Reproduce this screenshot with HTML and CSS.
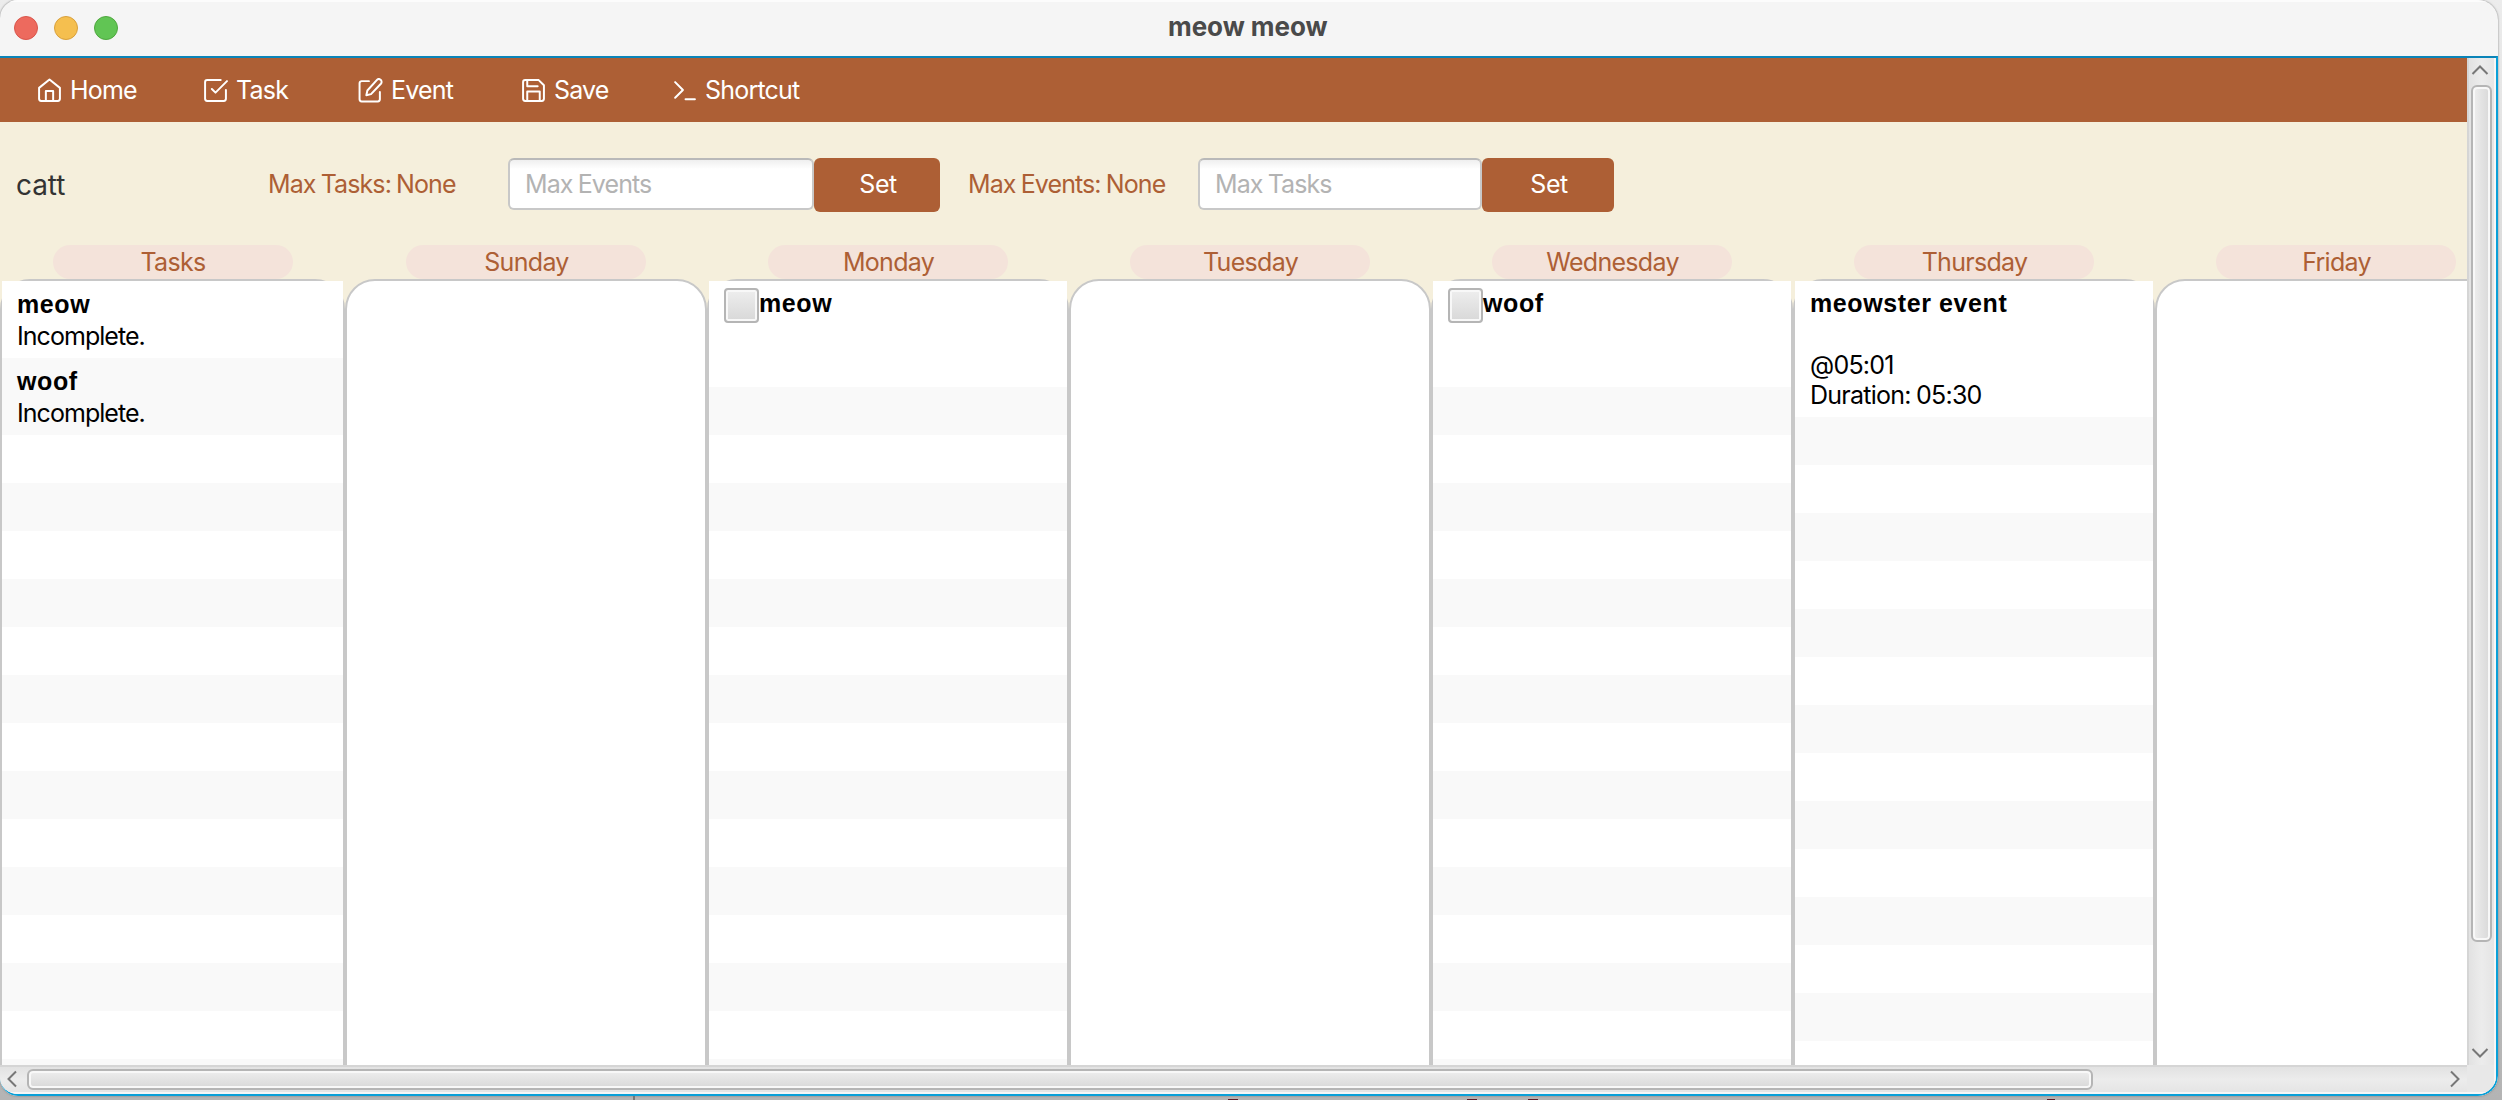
FILE: index.html
```
<!DOCTYPE html>
<html lang="en"><head><meta charset="utf-8"><title>meow meow</title><link rel="stylesheet" href="styles.css"></head>
<body>
<div class="window">
  <header class="titlebar"><div class="lights"><i class="light red"></i><i class="light yellow"></i><i class="light green"></i></div><span class="title">meow meow</span></header>
  <div class="frame">
    <div class="viewport">
      <nav class="nav">
        <a class="item home"><svg class="ico" viewBox="0 0 24 24"><path d="M2 9.500 12 1.500l10 8V20a2 2 0 0 1-2 2H4a2 2 0 0 1-2-2zM8.500 22v-9.500h7V22"/></svg><span>Home</span></a>
        <a class="item task"><svg class="ico" viewBox="0 0 24 24"><path d="M8.500 10.500l3.500 3.500L23 3M22 11.500V20a2 2 0 0 1-2 2H4a2 2 0 0 1-2-2V4a2 2 0 0 1 2-2h13"/></svg><span>Task</span></a>
        <a class="item event"><svg class="ico" viewBox="0 0 24 24"><path d="M10.500 3H3.500a2 2 0 0 0-2 2v15.500a2 2 0 0 0 2 2H19a2 2 0 0 0 2-2v-7M18 2a2.400 2.400 0 0 1 4 3.500L12.500 15.500l-4.500 1 1-4.500z"/></svg><span>Event</span></a>
        <a class="item save"><svg class="ico" viewBox="0 0 24 24"><path d="M20 22H4a2 2 0 0 1-2-2V4a2 2 0 0 1 2-2h13l5 5v13a2 2 0 0 1-2 2zM18 22v-9H6v9M6 2v6h10"/></svg><span>Save</span></a>
        <a class="item shortcut"><svg class="ico" viewBox="0 0 24 24"><path d="M3 19l7.500-7.500L3 4M13 20.500h9"/></svg><span>Shortcut</span></a>
      </nav>
      <section class="controls">
        <span class="name">catt</span>
        <span class="limit tasks">Max Tasks: None</span>
        <div class="field first">Max Events</div><div class="set one">Set</div>
        <span class="limit events">Max Events: None</span>
        <div class="field second">Max Tasks</div><div class="set two">Set</div>
      </section>
      <main class="board">
        <div class="col narrow"><div class="tag">Tasks</div><div class="list"><div class="rows">
          <div class="cell"><b>meow</b><span>Incomplete.</span></div><div class="cell alt"><b>woof</b><span>Incomplete.</span></div><div class="stripes"></div></div></div></div>
        <div class="col"><div class="tag">Sunday</div><div class="list"></div></div>
        <div class="col"><div class="tag">Monday</div><div class="list"><div class="rows"><div class="todo"><i class="check"></i><b>meow</b></div><div class="stripes odd"></div></div></div></div>
        <div class="col"><div class="tag">Tuesday</div><div class="list"></div></div>
        <div class="col"><div class="tag">Wednesday</div><div class="list"><div class="rows"><div class="todo"><i class="check"></i><b>woof</b></div><div class="stripes odd"></div></div></div></div>
        <div class="col"><div class="tag">Thursday</div><div class="list"><div class="rows"><div class="event-cell"><b>meowster event</b><span>@05:01</span><span>Duration: 05:30</span></div><div class="stripes odd"></div></div></div></div>
        <div class="col"><div class="tag">Friday</div><div class="list"></div></div>
      </main>
    </div>
    <div class="vbar"><svg class="arrow up" viewBox="0 0 18 10"><path d="M1.500 9 9 1.500 16.500 9"/></svg><div class="vthumb"></div><svg class="arrow down" viewBox="0 0 18 10"><path d="M1.500 1 9 8.500 16.500 1"/></svg></div>
    <div class="hbar"><svg class="arrow left" viewBox="0 0 10 18"><path d="M9 1.500 1.500 9 9 16.500"/></svg><div class="hthumb"></div><svg class="arrow right" viewBox="0 0 10 18"><path d="M1 1.500 8.500 9 1 16.500"/></svg></div>
    <div class="corner"></div>
  </div>
</div>
</body></html>
```
FILE: styles.css
```
*{box-sizing:border-box}
body{
  margin:0;width:2502px;height:1100px;overflow:hidden;
  background:
    linear-gradient(#777,#777) 633px 1096px/2px 4px no-repeat,
    linear-gradient(#5a1d2a,#5a1d2a) 1228px 1099px/10px 1px no-repeat,
    linear-gradient(#5a1d2a,#5a1d2a) 1467px 1099px/10px 1px no-repeat,
    linear-gradient(#5a1d2a,#5a1d2a) 1528px 1099px/10px 1px no-repeat,
    linear-gradient(#5a1d2a,#5a1d2a) 2047px 1099px/8px 1px no-repeat,
    linear-gradient(#ececec,#d0d0d0 40%,#b4b4b4);
  font-family:Inter,"Liberation Sans",sans-serif;font-size:25px;letter-spacing:-.9px;word-spacing:-1px
}
.window{width:2498px;height:1096px;border-radius:18px 20px 20px 18px;overflow:hidden;background:#f5f5f5;box-shadow:0 0 2px #777}
.titlebar{height:56px;display:grid;grid-template-columns:1168px auto;align-items:center;border-top:2px solid #fcfcfc;padding-bottom:2px}
.lights{display:flex;gap:16px;padding-left:14px}
.light{width:24px;height:24px;border-radius:50%;border:1px solid #d9564c;background:#ed6a5e}
.yellow{background:#f5bf4f;border-color:#d8a03d}
.green{background:#61c554;border-color:#4fa73f}
.title{font-weight:700;font-size:26px;color:#4a4a4a;white-space:nowrap;letter-spacing:-.05px;word-spacing:0;line-height:30px;padding-bottom:2px}
.frame{height:1040px;border-top:2px solid #0a84b8;border-right:2px solid #0aa0d8;border-bottom:2px solid #0aa0d8;display:grid;grid-template-columns:2467px 29px;grid-template-rows:1007px 29px;border-radius:0 0 20px 18px;overflow:hidden}
.viewport{overflow:hidden;background:#f5efdc}
.nav{height:64px;background:#ad5f35;color:#fff;display:flex;align-items:center;letter-spacing:-.8px}
.item{display:flex;align-items:center;gap:8px;white-space:nowrap}
.ico{width:25px;height:25px;fill:none;stroke:#fff;stroke-width:1.9;stroke-linecap:round;stroke-linejoin:round}
.arrow{fill:none;stroke:#777;stroke-width:2;flex:none}
.home{margin-left:37px;width:166px}
.task{width:155px}
.event{width:163px}
.save{width:151px}
.controls{height:123px;display:flex;align-items:center;color:#ad5f35;white-space:nowrap;padding-top:3px}
.name{color:#333;font-size:28px;width:252px;padding-left:16px;letter-spacing:-.1px}
.limit{margin-top:-2px}
.limit.tasks{width:256px;padding-left:16px}
.limit.events{width:258px;padding-left:28px}
.field{height:52px;border:2px solid #c8c8c8;border-top-color:#b9b9b9;border-radius:6px;background:linear-gradient(#efefef,#fff 9px);color:#b3b3b3;padding-left:15px;line-height:48px;margin-top:-2px}
.first{width:306px}
.second{width:284px}
.set{height:54px;border-radius:6px;background:#ad5f35;color:#fff;text-align:center;line-height:52px;letter-spacing:-.5px;padding-left:2px}
.one{width:126px}
.two{width:132px}
.board{display:flex;height:820px}
.col{width:362px;flex:none;display:flex;flex-direction:column;align-items:center}
.narrow{width:345px}
.tag{width:240px;height:34px;border-radius:17px;background:#f4e3da;color:#ad5f35;text-align:center;line-height:34px;padding-left:1px;letter-spacing:-.7px}
.list{align-self:stretch;height:830px;flex:none;border:2px solid #c8c8c8;border-radius:30px;background:#fff}
.rows{height:800px;background:#fff;color:#000;display:flex;flex-direction:column}
b{font-family:"Liberation Sans",sans-serif;letter-spacing:.6px;word-spacing:0;line-height:30px;white-space:nowrap}
.cell{height:77px;padding:8px 15px 6px;display:flex;flex-direction:column}
.alt{background:#f9f9f9}
.cell b{height:32px}
.cell span{line-height:32px;letter-spacing:-.95px}
.todo{height:106px;padding:7px 15px;display:flex;align-items:flex-start}
.check{width:35px;height:35px;border:2px solid #b5b5b5;border-radius:4px;background:linear-gradient(#eee,#d8d8d8);box-shadow:inset 0 0 0 2px #f8f8f8}
.event-cell{height:136px;padding:7px 15px;display:flex;flex-direction:column}
.event-cell b{height:62px}
.event-cell span{line-height:30px;letter-spacing:-.75px}
.stripes{flex:1;background:repeating-linear-gradient(#fff 0 48px,#f9f9f9 48px 96px)}
.stripes.odd{background:repeating-linear-gradient(#f9f9f9 0 48px,#fff 48px 96px)}
.vbar{border-left:2px solid #d5d5d5;border-right:2px solid #f6f6f6;background:linear-gradient(90deg,#e2e2e2,#ececec 50%,#e5e5e5);display:flex;flex-direction:column;align-items:flex-start;padding:7px 2px 0}
.up,.down{width:18px;height:10px}
.vthumb{width:21px;height:857px;margin-top:10px;margin-bottom:106px;border:2px solid #b5b5b5;border-radius:6px;background:linear-gradient(90deg,#eee,#d8d8d8);box-shadow:inset 0 0 0 2px #f8f8f8;flex:none}
.hbar{border-top:2px solid #d5d5d5;border-bottom:2px solid #f6f6f6;background:linear-gradient(#e2e2e2,#ececec 50%,#e5e5e5);display:flex;align-items:center}
.left,.right{width:10px;height:18px;margin-bottom:2px}
.left{margin-left:7px}
.hthumb{width:2066px;height:21px;margin:0 357px 0 10px;border:2px solid #b5b5b5;border-radius:6px;background:linear-gradient(#eee,#d8d8d8);box-shadow:inset 0 0 0 2px #f8f8f8;flex:none}
.corner{background:#e8e8e8;border:solid #f6f6f6;border-width:0 2px 2px 0}
```
